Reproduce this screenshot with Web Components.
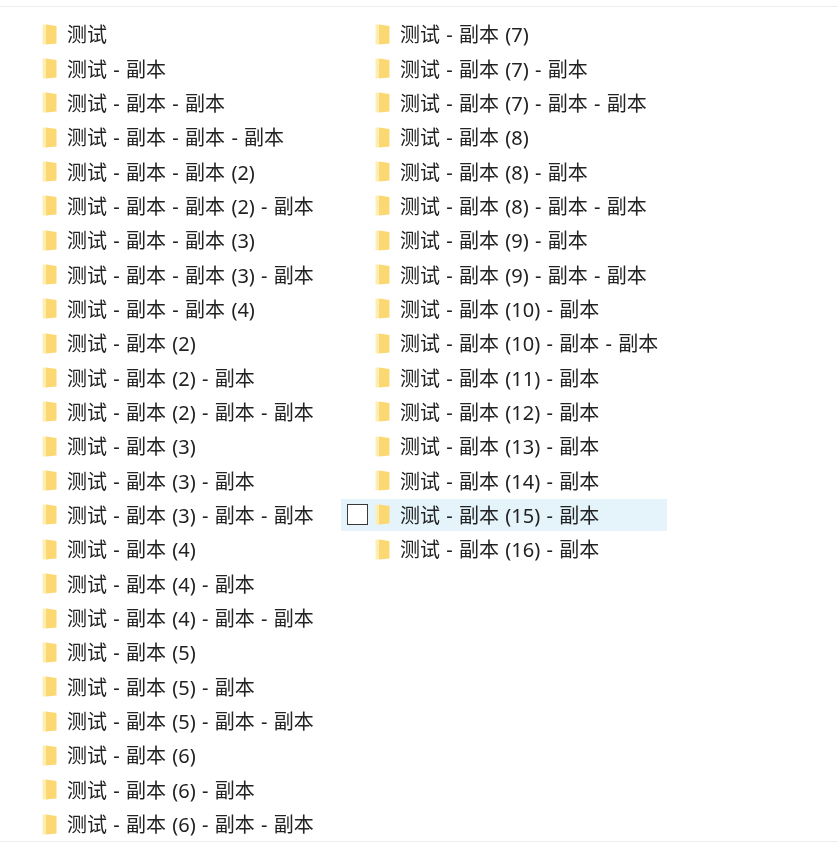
<!DOCTYPE html>
<html lang="zh-CN">
<head>
<meta charset="utf-8">
<title>测试</title>
<style>
  html, body { margin: 0; padding: 0; background: #fff; }
</style>
</head>
<body>
<file-pane>
  <folder-column>
    <folder-row name="测试"></folder-row>
    <folder-row name="测试 - 副本"></folder-row>
    <folder-row name="测试 - 副本 - 副本"></folder-row>
    <folder-row name="测试 - 副本 - 副本 - 副本"></folder-row>
    <folder-row name="测试 - 副本 - 副本 (2)"></folder-row>
    <folder-row name="测试 - 副本 - 副本 (2) - 副本"></folder-row>
    <folder-row name="测试 - 副本 - 副本 (3)"></folder-row>
    <folder-row name="测试 - 副本 - 副本 (3) - 副本"></folder-row>
    <folder-row name="测试 - 副本 - 副本 (4)"></folder-row>
    <folder-row name="测试 - 副本 (2)"></folder-row>
    <folder-row name="测试 - 副本 (2) - 副本"></folder-row>
    <folder-row name="测试 - 副本 (2) - 副本 - 副本"></folder-row>
    <folder-row name="测试 - 副本 (3)"></folder-row>
    <folder-row name="测试 - 副本 (3) - 副本"></folder-row>
    <folder-row name="测试 - 副本 (3) - 副本 - 副本"></folder-row>
    <folder-row name="测试 - 副本 (4)"></folder-row>
    <folder-row name="测试 - 副本 (4) - 副本"></folder-row>
    <folder-row name="测试 - 副本 (4) - 副本 - 副本"></folder-row>
    <folder-row name="测试 - 副本 (5)"></folder-row>
    <folder-row name="测试 - 副本 (5) - 副本"></folder-row>
    <folder-row name="测试 - 副本 (5) - 副本 - 副本"></folder-row>
    <folder-row name="测试 - 副本 (6)"></folder-row>
    <folder-row name="测试 - 副本 (6) - 副本"></folder-row>
    <folder-row name="测试 - 副本 (6) - 副本 - 副本"></folder-row>
  </folder-column>
  <folder-column>
    <folder-row name="测试 - 副本 (7)"></folder-row>
    <folder-row name="测试 - 副本 (7) - 副本"></folder-row>
    <folder-row name="测试 - 副本 (7) - 副本 - 副本"></folder-row>
    <folder-row name="测试 - 副本 (8)"></folder-row>
    <folder-row name="测试 - 副本 (8) - 副本"></folder-row>
    <folder-row name="测试 - 副本 (8) - 副本 - 副本"></folder-row>
    <folder-row name="测试 - 副本 (9) - 副本"></folder-row>
    <folder-row name="测试 - 副本 (9) - 副本 - 副本"></folder-row>
    <folder-row name="测试 - 副本 (10) - 副本"></folder-row>
    <folder-row name="测试 - 副本 (10) - 副本 - 副本"></folder-row>
    <folder-row name="测试 - 副本 (11) - 副本"></folder-row>
    <folder-row name="测试 - 副本 (12) - 副本"></folder-row>
    <folder-row name="测试 - 副本 (13) - 副本"></folder-row>
    <folder-row name="测试 - 副本 (14) - 副本"></folder-row>
    <folder-row name="测试 - 副本 (15) - 副本" hovered></folder-row>
    <folder-row name="测试 - 副本 (16) - 副本"></folder-row>
  </folder-column>
</file-pane>

<script>
  // --- outer pane, thin rule top and bottom ---
  class FilePane extends HTMLElement {
    constructor() {
      super();
      this.attachShadow({ mode: 'open' });
      this.shadowRoot.innerHTML = `
        <style>
          :host {
            display: block;
            margin-top: 6px;
            height: 836px;
            box-sizing: border-box;
            border-top: 1px solid #eeeeee;
            border-bottom: 1px solid #eeeeee;
            padding: 10px 0 0 8px;
            font-family: "Noto Sans", "Noto Sans CJK SC", sans-serif;
            color: #222;
          }
          .cols { display: grid; grid-template-columns: 333px 326px; }
        </style>
        <div class="cols"><slot></slot></div>
      `;
    }
  }

  class FolderColumn extends HTMLElement {
    constructor() {
      super();
      this.attachShadow({ mode: 'open' });
      this.shadowRoot.innerHTML = `
        <style>
          :host { display: grid; grid-auto-rows: 34.35px; align-content: start; }
        </style>
        <slot></slot>
      `;
    }
  }

  const rowTpl = document.createElement('template');
  rowTpl.innerHTML = `
    <style>
      :host { display: flex; align-items: center; min-width: 0; white-space: nowrap; }
      /* highlight is a bit shorter than the row pitch */
      :host([hovered]) { background: linear-gradient(#e5f3fb, #e5f3fb) center / 100% 32px no-repeat; }
      .check {
        width: 21px; height: 21px; box-sizing: border-box; margin-left: 6px;
        border: 1.5px solid #3a3a3a; background: #fff; visibility: hidden; flex: none;
      }
      :host([hovered]) .check { visibility: visible; }
      svg { width: 15px; height: 21px; margin-left: 7px; flex: none; filter: blur(0.5px); }
      .name { margin-left: 10px; padding-top: 2px; font-size: 20px; line-height: 34px; word-spacing: 1.1px; filter: blur(0.35px); }
    </style>
    <span class="check"></span>
    <svg viewBox="0 0 15 21" aria-hidden="true">
      <path d="M0.5 0.5 L4 0.5 L4 20.5 L0.5 20.5 Z" fill="#fdeeb4"/>
      <path d="M4 0.5 L14.5 2 L14.5 19.5 L4 20.5 Z" fill="#fcd873"/>
    </svg>
    <span class="name"></span>
  `;

  class FolderRow extends HTMLElement {
    constructor() {
      super();
      this.attachShadow({ mode: 'open' });
      this.shadowRoot.appendChild(rowTpl.content.cloneNode(true));
    }
    connectedCallback() {
      this.shadowRoot.querySelector('.name').textContent = this.getAttribute('name') || '';
    }
  }

  customElements.define('file-pane', FilePane);
  customElements.define('folder-column', FolderColumn);
  customElements.define('folder-row', FolderRow);
</script>
</body>
</html>
